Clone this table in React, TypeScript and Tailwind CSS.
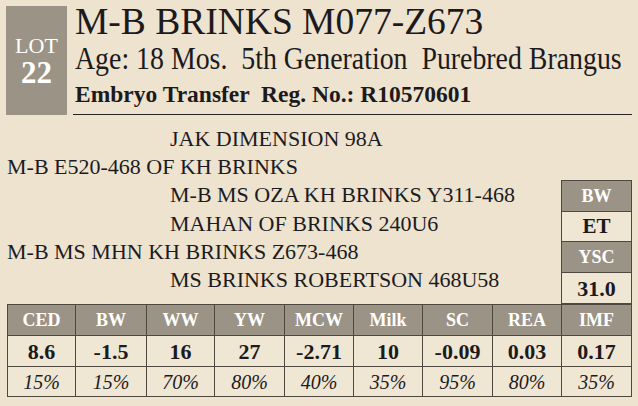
import React from "react";

const headers = ["CED", "BW", "WW", "YW", "MCW", "Milk", "SC", "REA", "IMF"];
const values = ["8.6", "-1.5", "16", "27", "-2.71", "10", "-0.09", "0.03", "0.17"];
const pcts = ["15%", "15%", "70%", "80%", "40%", "35%", "95%", "80%", "35%"];

const pedigree: { text: string; indent: boolean }[] = [
  { text: "JAK DIMENSION 98A", indent: true },
  { text: "M-B E520-468 OF KH BRINKS", indent: false },
  { text: "M-B MS OZA KH BRINKS Y311-468", indent: true },
  { text: "MAHAN OF BRINKS 240U6", indent: true },
  { text: "M-B MS MHN KH BRINKS Z673-468", indent: false },
  { text: "MS BRINKS ROBERTSON 468U58", indent: true },
];

export default function App() {
  return (
    <div className="w-[638px] h-[406px] bg-[#ede3cf] text-[#1c1a1c] flex flex-col overflow-hidden font-['Liberation_Serif']">
      {/* Header */}
      <div className="flex pt-[6px] pl-[6px] pr-[6px]">
        <div className="w-[61px] h-[109px] shrink-0 bg-[#9b9385] text-white flex flex-col items-center pt-[28px]">
          <div className="text-[22px] leading-[24px]">LOT</div>
          <div className="text-[31px] leading-[30px] font-bold">22</div>
        </div>
        <div className="ml-[6px] flex-1 min-w-0 border-b border-[#2a2624] pb-[6px] pl-[2px] whitespace-nowrap">
          <div className="text-[37.5px] leading-[31px]">M-B BRINKS M077-Z673</div>
          <div className="h-[43px]">
            <div className="text-[32px] leading-[43px] whitespace-pre origin-left scale-x-[0.87]">
              {"Age: 18 Mos.  5th Generation  Purebred Brangus"}
            </div>
          </div>
          <div className="text-[23.5px] leading-[28px] font-bold whitespace-pre">
            {"Embryo Transfer  Reg. No.: R10570601"}
          </div>
        </div>
      </div>

      {/* Pedigree + small table */}
      <div className="flex h-[189px] pr-[6px]">
        <div className="flex-1 min-w-0 pl-[7px] pt-[10px] text-[22px] leading-[28.2px] whitespace-nowrap text-[#1d1b22]">
          {pedigree.map((p, i) => (
            <div key={i} className={p.indent ? "pl-[163px]" : ""}>
              {p.text}
            </div>
          ))}
        </div>
        <div className="self-end shrink-0 w-[71px] bg-[#4f483f] p-px flex flex-col gap-px">
          <div className="h-[30px] bg-[#9b9385] text-white font-bold text-[18px] flex items-center justify-center">
            BW
          </div>
          <div className="h-[29px] bg-[#efe6d4] font-bold text-[21px] flex items-center justify-center">
            ET
          </div>
          <div className="h-[30px] bg-[#9b9385] text-white font-bold text-[18px] flex items-center justify-center">
            YSC
          </div>
          <div className="h-[30px] bg-[#efe6d4] font-bold text-[22px] flex items-center justify-center">
            31.0
          </div>
        </div>
      </div>

      {/* Main EPD table */}
      <div className="ml-[7px] w-[625px] bg-[#4f483f] p-px grid grid-cols-[67px_70px_67px_69px_68px_68px_69px_68px_69px] grid-rows-[30px_30px_29px] gap-px">
        {headers.map((h) => (
          <div
            key={h}
            className="bg-[#9b9385] text-white font-bold text-[18px] flex items-center justify-center"
          >
            {h}
          </div>
        ))}
        {values.map((v, i) => (
          <div
            key={"v" + i}
            className="bg-[#efe6d4] font-bold text-[22px] flex items-center justify-center"
          >
            {v}
          </div>
        ))}
        {pcts.map((p, i) => (
          <div
            key={"p" + i}
            className="bg-[#efe6d4] italic text-[20px] flex items-center justify-center"
          >
            {p}
          </div>
        ))}
      </div>
    </div>
  );
}
